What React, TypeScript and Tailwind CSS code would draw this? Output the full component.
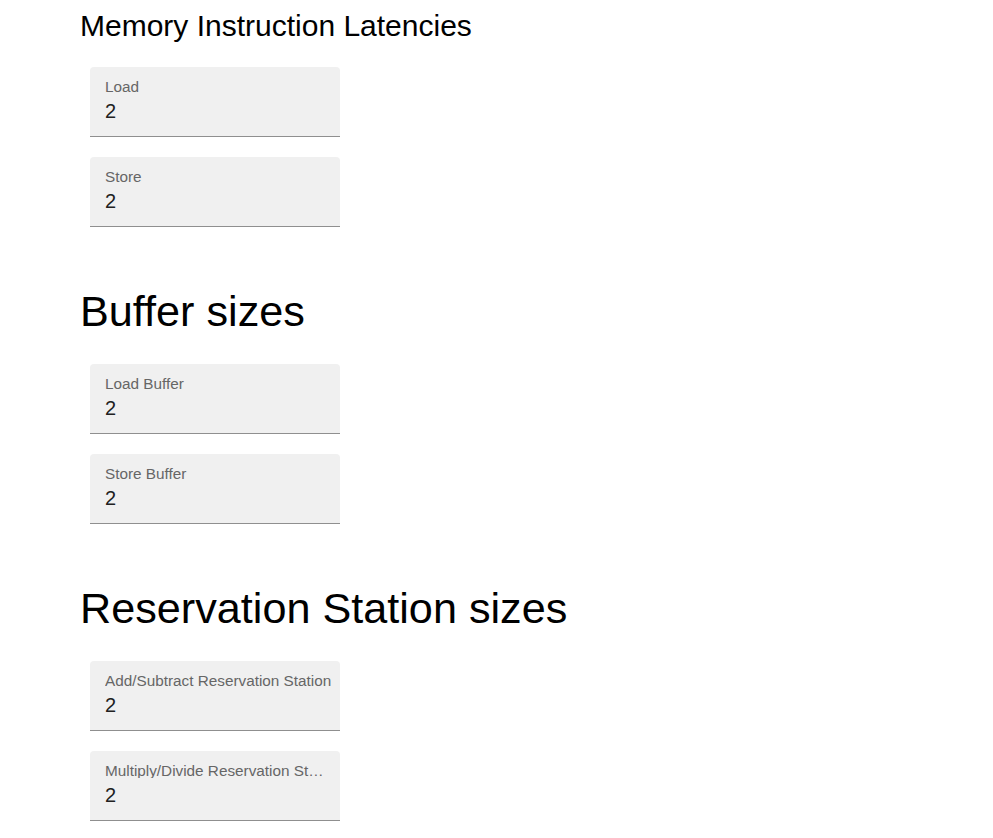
const sections = [
  {
    title: 'Memory Instruction Latencies',
    small: true,
    fields: [
      { label: 'Load', value: 2 },
      { label: 'Store', value: 2 },
    ],
  },
  {
    title: 'Buffer sizes',
    small: false,
    fields: [
      { label: 'Load Buffer', value: 2 },
      { label: 'Store Buffer', value: 2 },
    ],
  },
  {
    title: 'Reservation Station sizes',
    small: false,
    fields: [
      { label: 'Add/Subtract Reservation Station', value: 2 },
      { label: 'Multiply/Divide Reservation Station', value: 2 },
    ],
  },
];

function Field({ label, value }: { label: string; value: number }) {
  return (
    <div className="flex flex-col w-[250px] h-[70px] bg-[#f0f0f0] rounded-t-[4px] border-b border-[#8f8f8f] pt-[12px] pl-[15px]">
      <label className="w-[226.5px] truncate text-[15.3px] leading-[15px] text-[#666666]">
        {label}
      </label>
      <div className="mt-[7px] text-[20px] leading-[20px] text-[#212121]">{value}</div>
    </div>
  );
}

export default function App() {
  return (
    <div
      className="min-h-[838px] bg-white pt-[8px] pl-[80px]"
      style={{ fontFamily: '"Liberation Sans", Arial, sans-serif' }}
    >
      {sections.map((s, i) => (
        <section key={s.title} className={i === 0 ? '' : 'mt-[59px]'}>
          <h2
            className={
              s.small
                ? 'text-[30px] leading-[36px] text-black mb-[23px]'
                : 'text-[43.2px] leading-[50px] text-black mb-[28px]'
            }
          >
            {s.title}
          </h2>
          <div className="flex flex-col gap-[20px] pl-[10px]">
            {s.fields.map((f) => (
              <Field key={f.label} label={f.label} value={f.value} />
            ))}
          </div>
        </section>
      ))}
    </div>
  );
}
